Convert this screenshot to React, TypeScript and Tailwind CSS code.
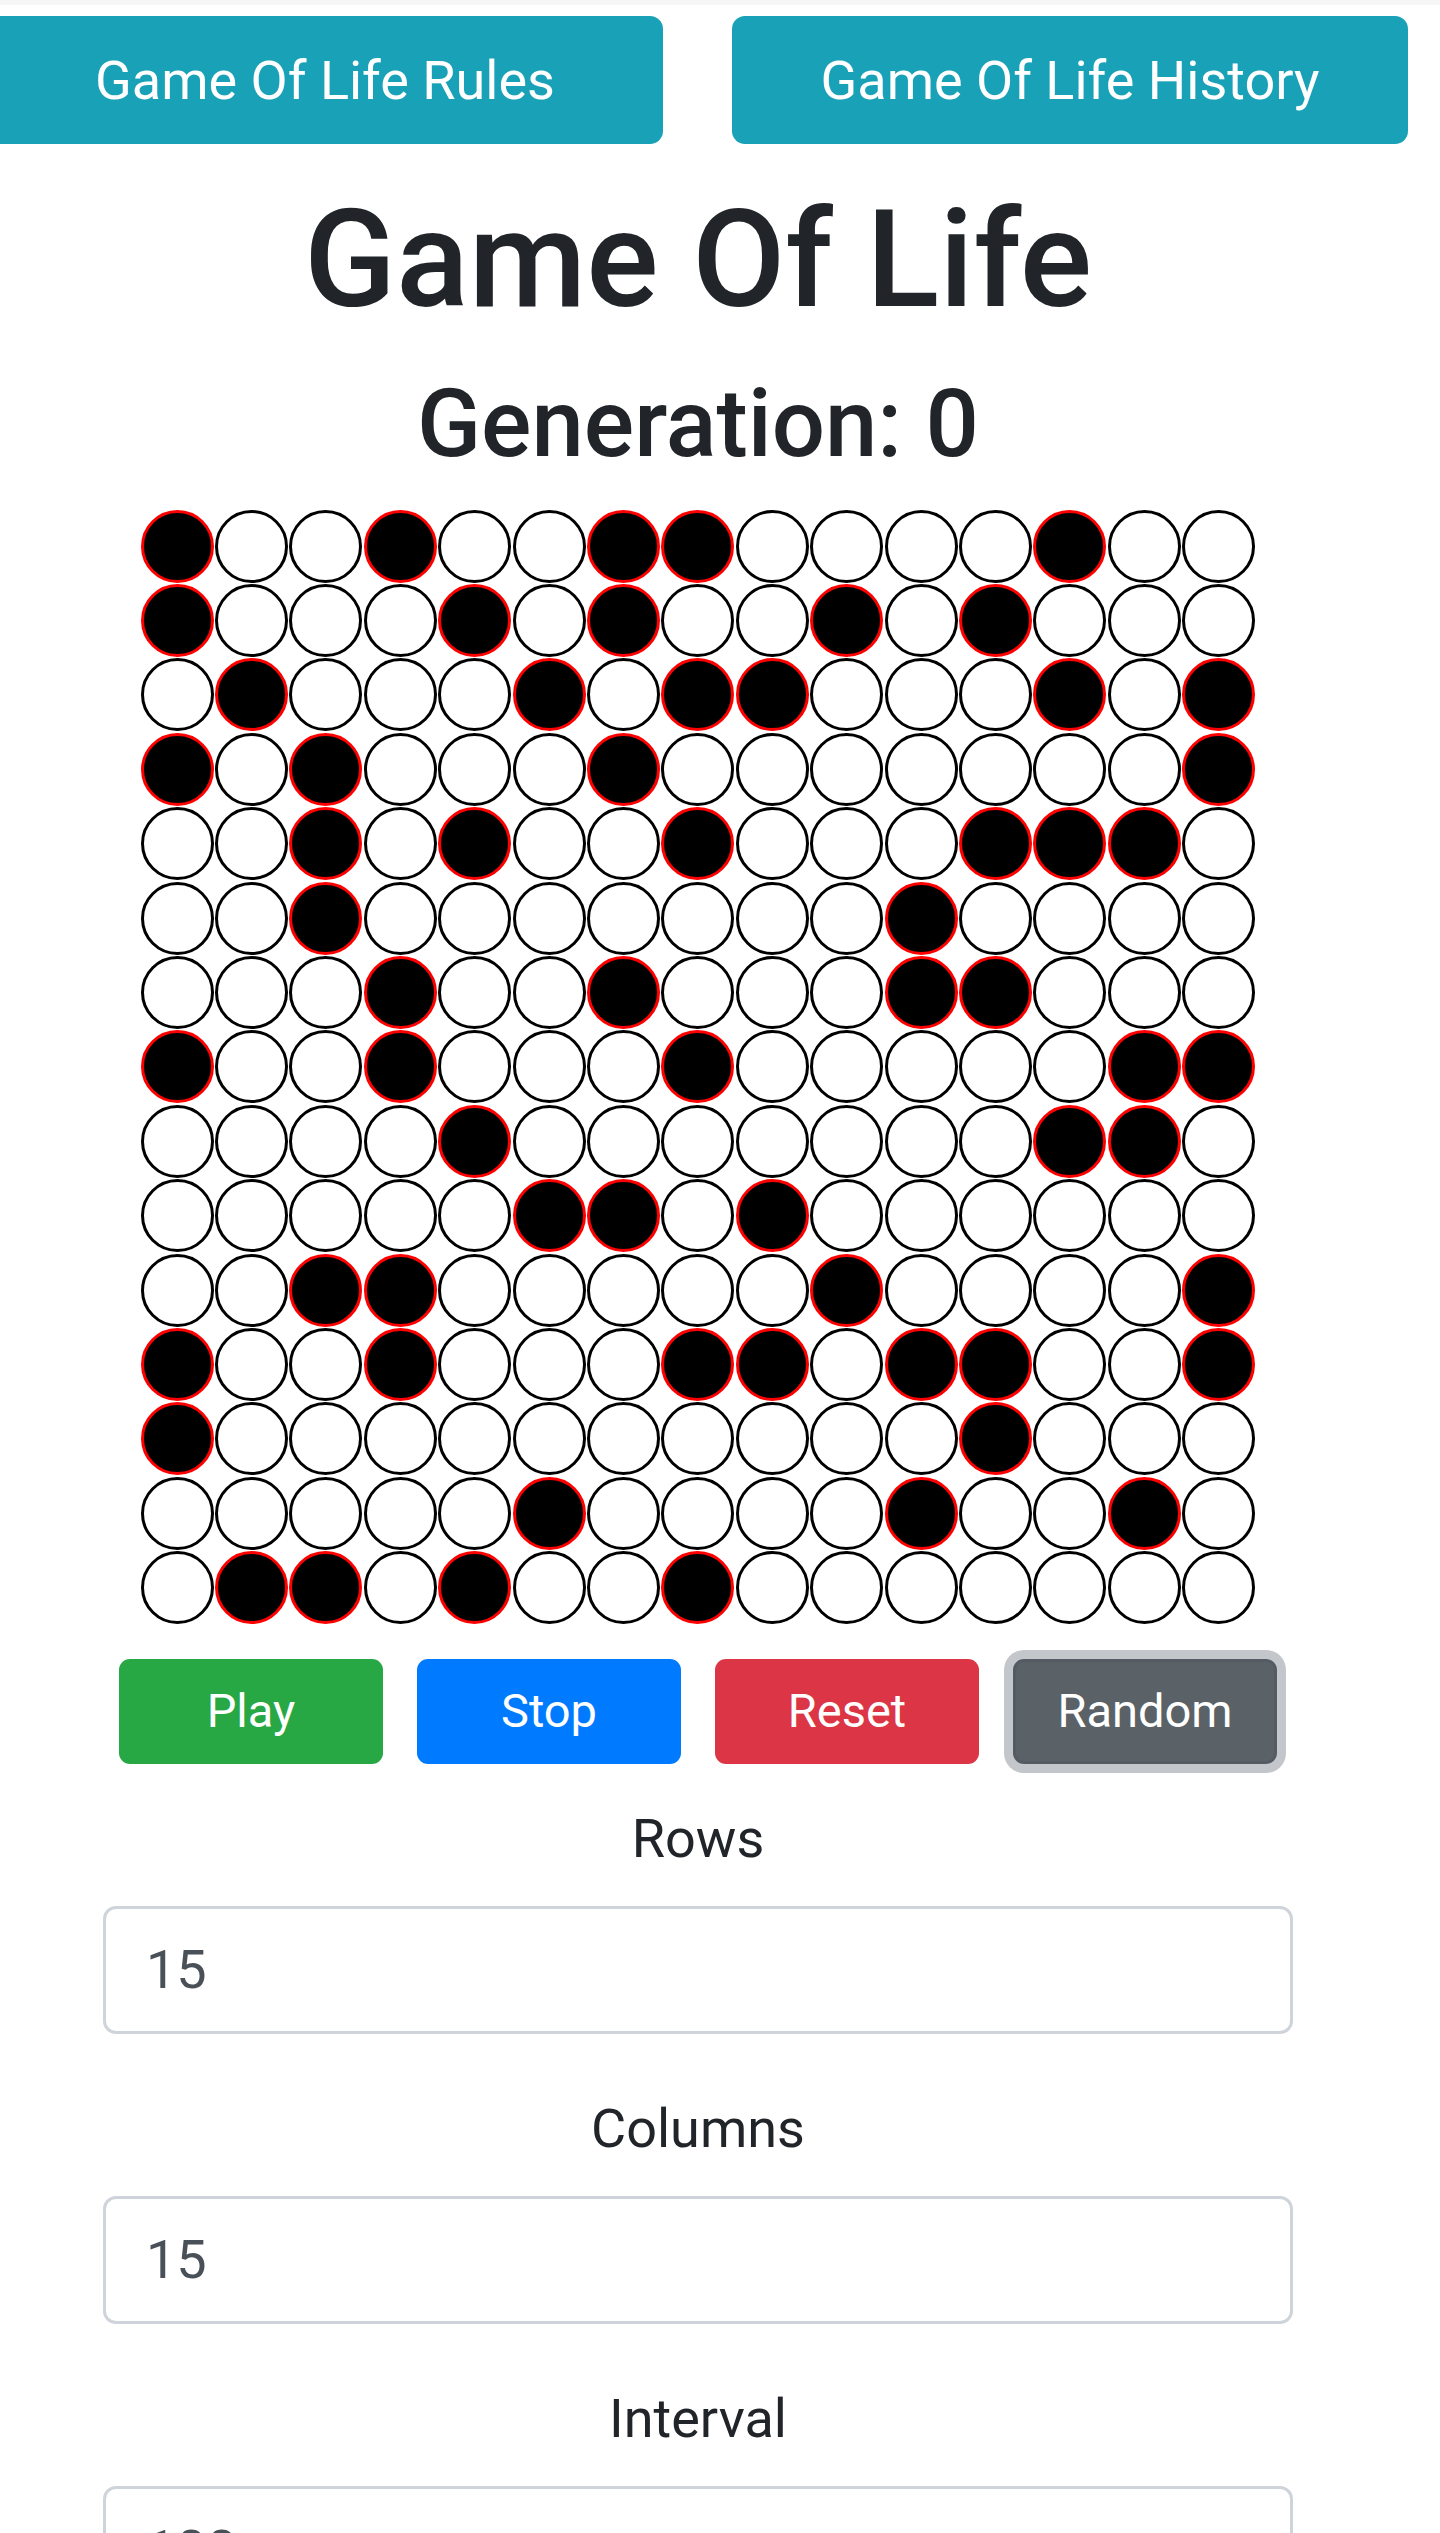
import React from "react";

const GRID = [
  "100100110000100",
  "100010100101000",
  "010001011000101",
  "101000100000001",
  "001010010001110",
  "001000000010000",
  "000100100011000",
  "100100010000011",
  "000010000000110",
  "000001101000000",
  "001100000100001",
  "100100011011001",
  "100000000001000",
  "000001000010010",
  "011010010000000",
];

function Field({ label, value }: { label: string; value: string }) {
  return (
    <div className="mb-[54px] flex flex-col items-center">
      <label className="mb-[27px] block text-center text-[54px] leading-[81px] text-[#212529]">{label}</label>
      <input
        defaultValue={value}
        className="box-border h-[128px] w-[1190px] rounded-[13px] border-[3px] border-[#ced4da] bg-white px-[40px] text-[54px] text-[#495057] outline-none"
      />
    </div>
  );
}

export default function App() {
  return (
    <div
      className="relative h-[2533px] w-[1440px] overflow-hidden bg-white"
      style={{ fontFamily: "Roboto, 'Liberation Sans', sans-serif" }}
    >
      <div className="h-[5px] w-full bg-[#f6f6f6]" />
      <div className="mt-[11px] ml-[-13px] flex gap-[69px]">
        <button className="h-[128px] w-[676px] rounded-[13px] bg-[#19a2b7] text-[54px] leading-[81px] text-white">
          Game Of Life Rules
        </button>
        <button className="h-[128px] w-[676px] rounded-[13px] bg-[#19a2b7] text-[54px] leading-[81px] text-white">
          Game Of Life History
        </button>
      </div>

      <div className="flex w-[1396px] flex-col items-center">
        <h1 className="mt-[35px] mb-[27px] text-[135px] leading-[162px] font-medium text-[#212529]">Game Of Life</h1>
        <h3 className="mb-[28px] text-[94px] leading-[113px] font-medium text-[#212529]">Generation: 0</h3>

        <div className="flex w-[1116px] flex-wrap">
          {GRID.map((row, r) =>
            row.split("").map((c, i) => (
              <div key={`${r}-${i}`} className="flex h-[74.4px] w-[74.4px] items-center justify-center">
                {c === "1" ? (
                  <div className="h-[73px] w-[73px] rounded-full border-[3px] border-[#ff0000] bg-black" />
                ) : (
                  <div className="h-[73px] w-[73px] rounded-full border-[3px] border-black bg-white" />
                )}
              </div>
            ))
          )}
        </div>

        <div className="mt-[34px] flex gap-[34px]">
          <button className="h-[105px] w-[264px] rounded-[11px] bg-[#28a745] text-[47px] text-white">Play</button>
          <button className="h-[105px] w-[264px] rounded-[11px] bg-[#007bff] text-[47px] text-white">Stop</button>
          <button className="h-[105px] w-[264px] rounded-[11px] bg-[#dc3545] text-[47px] text-white">Reset</button>
          <button className="h-[105px] w-[264px] rounded-[11px] border-[3px] border-[#545b62] bg-[#5a6268] text-[47px] text-white shadow-[0_0_0_9px_#c3c6ca]">
            Random
          </button>
        </div>

        <div className="mt-[34px] flex flex-col items-center">
          <Field label="Rows" value="15" />
          <Field label="Columns" value="15" />
          <Field label="Interval" value="100" />
        </div>
      </div>
    </div>
  );
}
